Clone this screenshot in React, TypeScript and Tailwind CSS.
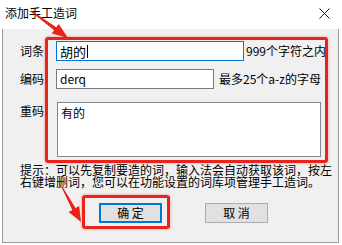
export default function App() {
  return (
    <div className="relative w-[342px] h-[245px] bg-white overflow-hidden font-['Noto_Sans_CJK_SC','Noto_Sans',sans-serif] text-black">
      <div className="h-[29px] flex items-center justify-between pl-[5px] pr-[12px] pb-[3px]">
        <span className="text-[12px] leading-none">添加手工造词</span>
        <svg width="11" height="11" viewBox="0 0 11 11">
          <path d="M0.5 0.5 L10.5 10.5 M10.5 0.5 L0.5 10.5" stroke="#111" strokeWidth="1" />
        </svg>
      </div>
      <div className="ml-[2px] w-[337px] h-[214px] border-x border-b border-[#9c9c9c] bg-[#f0f0f0] pt-[12px] pl-[17px] text-[12px]">
        <div className="flex items-center h-[20px]">
          <span className="w-[36px] leading-none">词条</span>
          <div className="w-[188px] h-[20px] border border-[#0078d7] bg-white pl-[3px] flex items-center text-[13px] leading-none">
            胡的<span className="ml-[1px] w-px h-[13px] bg-black" />
          </div>
          <span className="ml-[2px] leading-none">999个字符之内</span>
        </div>
        <div className="flex items-center h-[20px] mt-[8px]">
          <span className="w-[36px] leading-none">编码</span>
          <div className="w-[158px] h-[20px] border border-[#7a7a7a] bg-white pl-[3px] flex items-center leading-none">
            derq
          </div>
          <span className="ml-[5px] leading-none">最多25个a-z的字母</span>
        </div>
        <div className="flex items-start mt-[13px]">
          <span className="w-[37px] leading-[12px] mt-[3px]">重码</span>
          <div className="w-[264px] h-[55px] border border-[#828790] bg-white px-[3px] pt-[3px] leading-[13px]">
            有的
          </div>
        </div>
        <div className="mt-[7px] leading-[12px]">
          <div>提示：可以先复制要造的词，输入法会自动获取该词，按左</div>
          <div>右键增删词，您可以在功能设置的词库项管理手工造词。</div>
        </div>
        <div className="flex mt-[15px]">
          <div className="ml-[79px] w-[63px] h-[20px] border-2 border-[#0078d7] bg-[#e1e1e1] flex items-center justify-center leading-none">
            确 定
          </div>
          <div className="ml-[43px] w-[63px] h-[20px] border border-[#adadad] bg-[#e1e1e1] flex items-center justify-center leading-none">
            取 消
          </div>
        </div>
      </div>

      <div className="absolute left-[45px] top-[37px] w-[283px] h-[126px] border-[3px] border-[#e8231a] rounded-[3px] shadow-[0_0_3px_rgba(232,35,26,0.45)]" />
      <div className="absolute left-[82px] top-[195px] w-[88px] h-[34px] border-[3px] border-[#e8231a] rounded-[3px] shadow-[0_0_3px_rgba(232,35,26,0.45)]" />
      <svg className="absolute left-0 top-0 pointer-events-none" width="342" height="245" viewBox="0 0 342 245">
        <polygon fill="#e8231a" points="31.35,10.52 56.3,27.2 58.7,23.9 68,38 51.7,33.5 54.1,30.2 30.65,11.48" />
        <polygon fill="#e8231a" points="62.5,186.7 75.5,208.1 79.2,206.1 81,222 68.6,211.9 72.3,209.9 61.5,187.3" />
      </svg>
    </div>
  );
}
